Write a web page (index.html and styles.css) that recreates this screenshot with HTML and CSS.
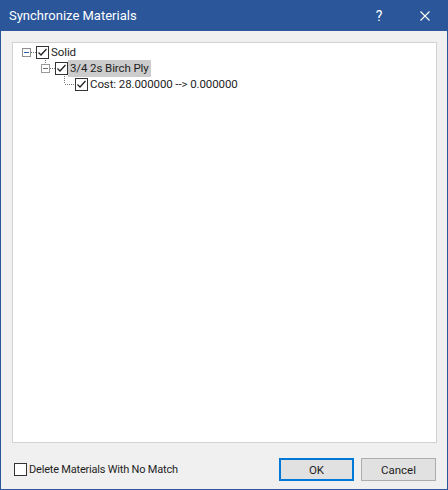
FILE: index.html
```html
<!DOCTYPE html>
<html>
<head>
<meta charset="utf-8">
<link rel="stylesheet" href="styles.css">
</head>
<body>
<div class="window">
  <div class="titlebar">
    <div class="title">Synchronize Materials</div>
    <div class="caption-btn help">?</div>
    <div class="caption-btn close">
      <svg width="10" height="10" viewBox="0 0 10 10"><path d="M0.5 0.5 L9.5 9.5 M9.5 0.5 L0.5 9.5" stroke="#fff" stroke-width="1.1" fill="none"/></svg>
    </div>
  </div>
  <div class="client">
    <div class="tree">
      <div class="row lvl0">
        <span class="handle">
          <svg width="19" height="16" viewBox="0 0 19 16">
            <rect x="5.5" y="4.5" width="8" height="8" fill="#fff" stroke="#8e8e8e"/>
            <path d="M7 8.5 H12" stroke="#2b5fa8" stroke-width="1"/>
            <path d="M14 8.5 H19" stroke="#777" stroke-dasharray="1 1"/>
          </svg>
        </span>
        <span class="check"><svg width="13" height="13" viewBox="0 0 13 13"><rect x="0.5" y="0.5" width="12" height="12" fill="#fff" stroke="#333"/><path d="M2.5 6.5 L5 9 L10.5 3" stroke="#222" stroke-width="1.3" fill="none"/></svg></span>
        <span class="label">Solid</span>
      </div>
      <div class="row lvl1">
        <span class="handle">
          <svg width="19" height="16" viewBox="0 0 19 16">
            <path d="M9.5 0 V4" stroke="#777" stroke-dasharray="1 1"/>
            <rect x="5.5" y="4.5" width="8" height="8" fill="#fff" stroke="#9a9a9a"/>
            <path d="M7 8.5 H12" stroke="#6b6b6b" stroke-width="1"/>
            <path d="M14 8.5 H19" stroke="#777" stroke-dasharray="1 1"/>
          </svg>
        </span>
        <span class="check"><svg width="13" height="13" viewBox="0 0 13 13"><rect x="0.5" y="0.5" width="12" height="12" fill="#fff" stroke="#333"/><path d="M2.5 6.5 L5 9 L10.5 3" stroke="#222" stroke-width="1.3" fill="none"/></svg></span>
        <span class="label selected">3/4 2s Birch Ply</span>
      </div>
      <div class="row lvl2">
        <span class="handle">
          <svg width="20" height="16" viewBox="0 0 20 16">
            <path d="M9.5 0 V8" stroke="#777" stroke-dasharray="1 1"/>
            <path d="M10 8.5 H20" stroke="#777" stroke-dasharray="1 1"/>
          </svg>
        </span>
        <span class="check"><svg width="13" height="13" viewBox="0 0 13 13"><rect x="0.5" y="0.5" width="12" height="12" fill="#fff" stroke="#333"/><path d="M2.5 6.5 L5 9 L10.5 3" stroke="#222" stroke-width="1.3" fill="none"/></svg></span>
        <span class="label">Cost: 28.000000 --&gt; 0.000000</span>
      </div>
    </div>
    <div class="footer">
      <label class="option">
        <span class="box"></span>
        <span>Delete Materials With No Match</span>
      </label>
      <div class="buttons">
        <button class="btn default">OK</button>
        <button class="btn">Cancel</button>
      </div>
    </div>
  </div>
</div>
</body>
</html>
```
FILE: styles.css
```css
* { box-sizing: border-box; }
html, body { margin: 0; padding: 0; }
body {
  width: 448px;
  height: 490px;
  font-family: Roboto, "Noto Sans", sans-serif;
  font-size: 11.5px;
  letter-spacing: -0.1px;
  color: #1e1e1e;
  background: #f0f0f0;
  overflow: hidden;
}
.window { width: 448px; height: 490px; display: flex; flex-direction: column; }
.titlebar {
  height: 31px;
  background: #2b579a;
  color: #fff;
  display: flex;
  align-items: center;
}
.title {
  flex: 1;
  padding-left: 9px;
  font-size: 13px;
  letter-spacing: 0;
}
.caption-btn {
  width: 46px;
  height: 31px;
  display: flex;
  align-items: center;
  justify-content: center;
}
.help { font-size: 14px; padding-top: 1px; }
.close svg { display: block; }
.client {
  flex: 1;
  border: 1px solid #2b579a;
  border-top: none;
  padding: 11px 10px 0 11px;
  display: flex;
  flex-direction: column;
}
.tree {
  height: 401px;
  border: 1px solid #d2d2d2;
  background: #fff;
  padding-top: 1px;
}
.row {
  height: 16px;
  display: flex;
  align-items: center;
}
.lvl0 { padding-left: 4px; }
.lvl1 { padding-left: 23px; }
.lvl2 { padding-left: 42px; }
.handle { height: 16px; display: block; }
.handle svg { display: block; }
.check { width: 13px; height: 13px; display: block; }
.check svg { display: block; }
.label {
  padding: 0 2px;
  line-height: 17px;
  white-space: nowrap;
}
.selected { background: #cccccc; }
.footer {
  height: 46px;
  display: flex;
  align-items: flex-start;
  padding-top: 15px;
  font-size: 11px;
  letter-spacing: -0.2px;
}
.option {
  flex: 1;
  height: 23px;
  display: flex;
  align-items: center;
  padding-left: 2px;
  gap: 2px;
}
.box {
  width: 13px;
  height: 13px;
  border: 1px solid #333;
  background: #fff;
}
.buttons { display: flex; gap: 7px; padding-right: 1px; }
.btn {
  width: 75px;
  height: 23px;
  font-family: Roboto, "Noto Sans", sans-serif;
  font-size: 11.5px;
  color: #1e1e1e;
  background: #e1e1e1;
  border: 1px solid #adadad;
  padding: 0;
  margin: 0;
}
.btn.default {
  border: 1px solid #0078d7;
  box-shadow: inset 0 0 0 1px #0078d7;
}
```
